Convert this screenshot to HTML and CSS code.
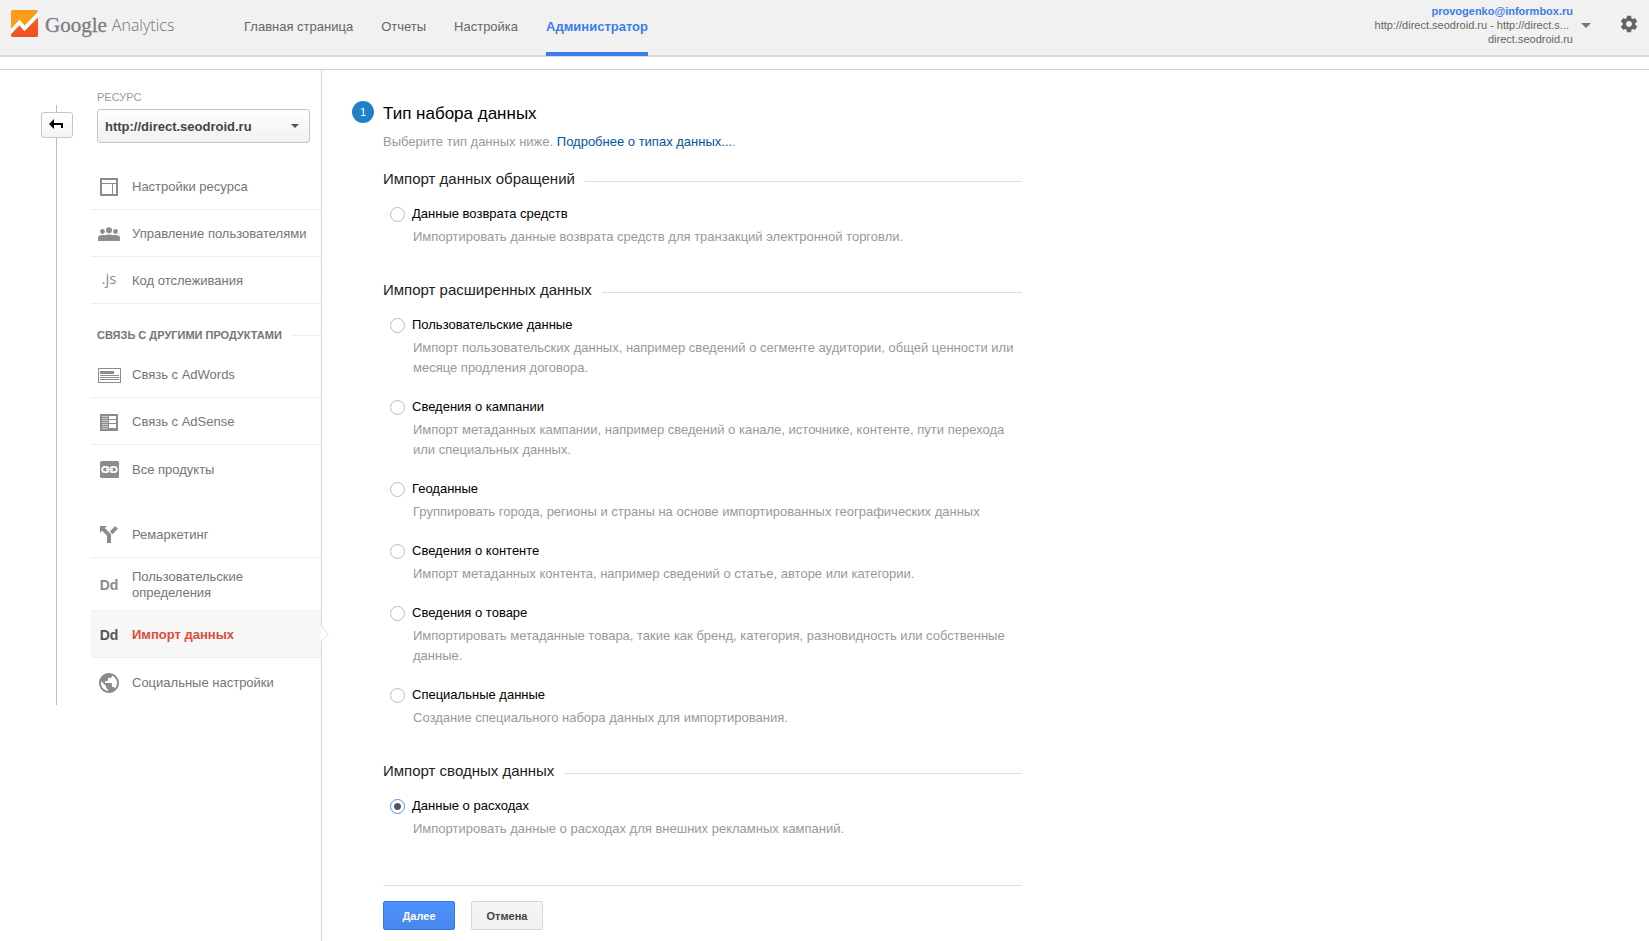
FILE: index.html
```html
<!DOCTYPE html>
<html lang="ru">
<head>
<meta charset="utf-8">
<title>Google Analytics</title>
<link rel="stylesheet" href="styles.css">
</head>
<body>
<header class="topbar">
  <a class="logo" href="#">
    <svg class="logo-mark" width="27" height="27" viewBox="0 0 27 27" aria-hidden="true">
      <defs>
        <linearGradient id="lg-top" x1="0" y1="0" x2="0" y2="1"><stop offset="0" stop-color="#f8981d"/><stop offset="1" stop-color="#fbab18"/></linearGradient>
        <linearGradient id="lg-bottom" x1="0" y1="0" x2="0" y2="1"><stop offset="0" stop-color="#f26522"/><stop offset="1" stop-color="#f04e23"/></linearGradient>
        <clipPath id="mark-clip"><rect width="27" height="27" rx="2"/></clipPath>
      </defs>
      <g clip-path="url(#mark-clip)">
        <rect width="27" height="27" fill="url(#lg-top)"/>
        <path d="M0 22.500 8.500 13l5.500 6L27 5v22H0z" fill="url(#lg-bottom)"/>
        <path d="M-2 23.500 8.500 12.500l5 6L29 2.500" fill="none" stroke="#fff" stroke-width="3.800"/>
      </g>
    </svg>
    <span class="logo-google">Google</span>
    <span class="logo-product">Analytics</span>
  </a>
  <nav class="tabs">
    <a class="tab" href="#">Главная страница</a>
    <a class="tab" href="#">Отчеты</a>
    <a class="tab" href="#">Настройка</a>
    <a class="tab tab-active" href="#">Администратор</a>
  </nav>
  <div class="account">
    <a class="account-email" href="#">provogenko@informbox.ru</a>
    <span class="account-view">http://direct.seodroid.ru - http://direct.s...</span>
    <span>direct.seodroid.ru</span>
  </div>
  <button class="icon-button account-toggle" type="button" aria-label="Аккаунты">
    <svg width="10" height="5" viewBox="0 0 10 5"><path d="M0 0h10L5 5z" fill="#777"/></svg>
  </button>
  <button class="icon-button" type="button" aria-label="Параметры">
    <svg width="20" height="20" viewBox="0 0 24 24"><path fill="#636363" d="M19.430 12.980c.04-.32.07-.64.07-.98s-.03-.66-.07-.98l2.110-1.650c.19-.15.24-.42.120-.64l-2-3.460c-.12-.22-.39-.3-.61-.22l-2.490 1c-.52-.4-1.080-.73-1.690-.98l-.38-2.650C14.460 2.180 14.250 2 14 2h-4c-.25 0-.46.18-.49.42l-.38 2.650c-.61.25-1.170.59-1.690.98l-2.490-1c-.23-.09-.49 0-.61.22l-2 3.460c-.13.22-.07.49.12.64l2.110 1.650c-.04.32-.07.65-.07.98s.03.66.07.98l-2.110 1.650c-.19.15-.24.42-.12.64l2 3.460c.12.22.39.3.61.22l2.490-1c.52.4 1.080.73 1.690.98l.38 2.650c.03.24.24.42.49.42h4c.25 0 .46-.18.49-.42l.38-2.650c.61-.25 1.170-.59 1.690-.98l2.490 1c.23.09.49 0 .61-.22l2-3.460c.12-.22.07-.49-.12-.64l-2.110-1.650zM12 15.500c-1.930 0-3.500-1.570-3.500-3.500s1.570-3.500 3.500-3.500 3.500 1.570 3.500 3.500-1.570 3.500-3.500 3.500z"/></svg>
  </button>
</header>

<div class="page">
  <aside class="sidebar">
    <div class="rail">
      <div class="rail-line"></div>
      <button class="back" type="button" aria-label="Назад">
        <svg width="15" height="10" viewBox="0 0 15 10"><path d="M0 5 5 0v4h9v5h-2V6H5v4z" fill="#000"/></svg>
      </button>
    </div>
    <div class="side">
      <div class="picker">
        <label class="picker-label" for="property">РЕСУРС</label>
        <div class="picker-box">
          <select id="property" class="picker-select"><option>http://direct.seodroid.ru</option></select>
          <svg class="picker-arrow" width="8" height="4" viewBox="0 0 8 4"><path d="M0 0h8L4 4z" fill="#555"/></svg>
        </div>
      </div>
      <nav class="menu">
        <a class="item" href="#">
          <span class="item-icon"><svg width="18" height="18" viewBox="0 0 18 18" shape-rendering="crispEdges"><path fill="#8c8c8c" d="M0 0h18v18H0zM2 2v3h14V2zM2 6v10h10V6zM13 6v10h3V6z" fill-rule="evenodd"/></svg></span>
          Настройки ресурса
        </a>
        <a class="item" href="#">
          <span class="item-icon"><svg width="22" height="15" viewBox="0 0 22 15"><g fill="#8c8c8c"><circle cx="4.500" cy="4.500" r="2.400"/><circle cx="11" cy="3.200" r="3"/><circle cx="17.500" cy="4.500" r="2.400"/><path d="M0 14V10.500C0 8.800 2.500 8 5 8c1 0 1.500.1 2.200.3C8.300 7.800 9.500 7.500 11 7.500s2.700.3 3.800.8C15.500 8.100 16 8 17 8c2.500 0 5 .8 5 2.500V14z"/></g></svg></span>
          Управление пользователями
        </a>
        <a class="item" href="#">
          <span class="item-icon icon-js">.js</span>
          Код отслеживания
        </a>
      </nav>
      <h2 class="menu-title">СВЯЗЬ С ДРУГИМИ ПРОДУКТАМИ</h2>
      <nav class="menu menu-linked">
        <a class="item" href="#">
          <span class="item-icon"><svg width="23" height="15" viewBox="0 0 23 15" shape-rendering="crispEdges"><path fill="#8c8c8c" fill-rule="evenodd" d="M0 0h23v15H0zM1 1v13h21V1zM2 3h14v3H2zM2 7h19v1H2zM2 9h19v1H2zM2 11h19v1H2z"/></svg></span>
          Связь с AdWords
        </a>
        <a class="item" href="#">
          <span class="item-icon"><svg width="18" height="17" viewBox="0 0 18 17" shape-rendering="crispEdges"><rect width="18" height="17" fill="#8c8c8c"/><path fill="#fff" d="M9 2h7v3H9zM9 6h7v3H9zM9 10h7v4H9z"/><path fill="#ccc" d="M2 2h6v1H2zM2 4h6v1H2zM2 6h6v1H2zM2 8h6v1H2zM2 10h6v1H2zM2 12h6v1H2zM2 14h6v1H2z"/></svg></span>
          Связь с AdSense
        </a>
        <a class="item" href="#">
          <span class="item-icon"><svg width="19" height="17" viewBox="0 0 19 17"><rect width="19" height="17" rx="1.500" fill="#8c8c8c"/><g fill="none" stroke="#fff" stroke-width="1.800"><path d="M8.700 7C8.200 6.200 7.500 5.900 6.500 5.900H4.800a2.600 2.600 0 0 0 0 5.200h1.700c1 0 1.700-.3 2.200-1.100M10.300 7c.5-.8 1.200-1.100 2.200-1.100h1.700a2.600 2.600 0 0 1 0 5.200h-1.700c-1 0-1.700-.3-2.200-1.100M6 8.500h7"/></g></svg></span>
          Все продукты
        </a>
      </nav>
      <nav class="menu menu-extra">
        <a class="item" href="#">
          <span class="item-icon"><svg width="18" height="18" viewBox="0 0 18 18"><g fill="#8c8c8c"><path d="M0 0h7L4.900 2.100 11 8.200V17H7V9.800L2.200 4.800 0 7z"/><path d="M9.800 5.400 15.200 0 18 2.700 12.500 8.200z"/></g></svg></span>
          Ремаркетинг
        </a>
        <a class="item item-tall" href="#">
          <span class="item-icon icon-dd">Dd</span>
          Пользовательские<br>определения
        </a>
        <a class="item item-active" href="#" aria-current="page">
          <span class="item-icon icon-dd">Dd</span>
          Импорт данных
          <svg class="pointer" width="9" height="16" viewBox="0 0 9 16"><path d="M0 0v16L8 8z" fill="#fff"/><path d="M0 .5 7.500 8 0 15.500" fill="none" stroke="#ddd"/></svg>
        </a>
        <a class="item" href="#">
          <span class="item-icon"><svg width="20" height="20" viewBox="2 2 20 20"><path fill="#8c8c8c" d="M12 2C6.480 2 2 6.480 2 12s4.480 10 10 10 10-4.480 10-10S17.520 2 12 2zm-1 17.930c-3.950-.49-7-3.850-7-7.930 0-.62.08-1.210.21-1.790L9 15v1c0 1.100.9 2 2 2v1.930zm6.900-2.540c-.26-.81-1-1.390-1.900-1.390h-1v-3c0-.55-.45-1-1-1H8v-2h2c.55 0 1-.45 1-1V7h2c1.100 0 2-.9 2-2v-.41c2.930 1.190 5 4.060 5 7.410 0 2.080-.8 3.970-2.100 5.390z"/></svg></span>
          Социальные настройки
        </a>
      </nav>
    </div>
  </aside>

  <main class="content">
    <span class="step">1</span>
    <form class="form">
      <h1 class="title">Тип набора данных</h1>
      <p class="lead">Выберите тип данных ниже. <a class="link" href="#">Подробнее о типах данных...</a>.</p>

      <fieldset class="group">
        <legend class="group-title">Импорт данных обращений</legend>
        <div class="option">
          <input class="radio" type="radio" name="type" id="refund" aria-describedby="refund-d">
          <label class="option-label" for="refund">Данные возврата средств</label>
          <p class="option-text" id="refund-d">Импортировать данные возврата средств для транзакций электронной торговли.</p>
        </div>
      </fieldset>

      <fieldset class="group">
        <legend class="group-title">Импорт расширенных данных</legend>
        <div class="option">
          <input class="radio" type="radio" name="type" id="user" aria-describedby="user-d">
          <label class="option-label" for="user">Пользовательские данные</label>
          <p class="option-text" id="user-d">Импорт пользовательских данных, например сведений о сегменте аудитории, общей ценности или месяце продления договора.</p>
        </div>
        <div class="option">
          <input class="radio" type="radio" name="type" id="campaign" aria-describedby="campaign-d">
          <label class="option-label" for="campaign">Сведения о кампании</label>
          <p class="option-text" id="campaign-d">Импорт метаданных кампании, например сведений о канале, источнике, контенте, пути перехода или специальных данных.</p>
        </div>
        <div class="option">
          <input class="radio" type="radio" name="type" id="geo" aria-describedby="geo-d">
          <label class="option-label" for="geo">Геоданные</label>
          <p class="option-text" id="geo-d">Группировать города, регионы и страны на основе импортированных географических данных</p>
        </div>
        <div class="option">
          <input class="radio" type="radio" name="type" id="contents" aria-describedby="contents-d">
          <label class="option-label" for="contents">Сведения о контенте</label>
          <p class="option-text" id="contents-d">Импорт метаданных контента, например сведений о статье, авторе или категории.</p>
        </div>
        <div class="option">
          <input class="radio" type="radio" name="type" id="product" aria-describedby="product-d">
          <label class="option-label" for="product">Сведения о товаре</label>
          <p class="option-text" id="product-d">Импортировать метаданные товара, такие как бренд, категория, разновидность или собственные данные.</p>
        </div>
        <div class="option">
          <input class="radio" type="radio" name="type" id="custom" aria-describedby="custom-d">
          <label class="option-label" for="custom">Специальные данные</label>
          <p class="option-text" id="custom-d">Создание специального набора данных для импортирования.</p>
        </div>
      </fieldset>

      <fieldset class="group">
        <legend class="group-title">Импорт сводных данных</legend>
        <div class="option">
          <input class="radio" type="radio" name="type" id="cost" aria-describedby="cost-d" checked>
          <label class="option-label" for="cost">Данные о расходах</label>
          <p class="option-text" id="cost-d">Импортировать данные о расходах для внешних рекламных кампаний.</p>
        </div>
      </fieldset>

      <div class="actions">
        <button class="button button-primary" type="button">Далее</button>
        <button class="button" type="button">Отмена</button>
      </div>
    </form>
  </main>
</div>
</body>
</html>
```
FILE: styles.css
```css
* {
  box-sizing: border-box;
}

body {
  margin: 0;
  min-height: 100vh;
  display: flex;
  flex-direction: column;
  background: #fff;
  color: #222;
  font: 13px/20px "Liberation Sans", Arial, sans-serif;
}

a {
  color: inherit;
  text-decoration: none;
}

h1, h2, p {
  margin: 0;
}

svg {
  display: block;
  flex: none;
}

/* Top bar */

.topbar {
  display: flex;
  height: 57px;
  padding: 0 10px 0 11px;
  background: #f1f1f1;
  border-bottom: 2px solid #d9d9d9;
}

.logo {
  display: flex;
  align-items: flex-start;
  width: 233px;
  color: #757575;
}

.logo-mark {
  margin-top: 10px;
}

.logo-google {
  margin: 11px 0 0 7px;
  font: 21px/28px "Liberation Serif", "Times New Roman", serif;
  color: #7b7e82;
  -webkit-text-stroke: 0.3px #7b7e82;
}

.logo-product {
  margin: 11px 0 0 5px;
  font: 300 16px/28px "Open Sans", sans-serif;
}

.tabs {
  display: flex;
  gap: 28px;
}

.tab {
  height: 56px;
  padding-top: 17px;
  color: #666;
}

.tab-active {
  border-bottom: 4px solid #3b7ded;
  color: #3b7ded;
  font-weight: bold;
}

.account {
  display: flex;
  flex-direction: column;
  align-items: flex-end;
  margin-left: auto;
  padding-top: 4px;
  color: #666;
  font-size: 11px;
  line-height: 14px;
}

.account-email {
  color: #3b7ded;
  font-weight: bold;
}

.account-view {
  padding-right: 4px;
}

.icon-button {
  display: flex;
  align-items: center;
  justify-content: center;
  width: 20px;
  height: 48px;
  padding: 0;
  border: 0;
  background: none;
}

.account-toggle {
  margin: 1px 23px 0 3px;
}

/* Page frame */

.page {
  display: flex;
  flex: 1;
  margin-top: 12px;
  border-top: 1px solid #ccc;
}

.sidebar {
  display: flex;
  flex: none;
  align-items: flex-start;
  width: 322px;
  padding-left: 41px;
  border-right: 1px solid #d6d6d6;
}

.rail {
  display: grid;
  flex: none;
  align-self: flex-start;
  width: 32px;
  height: 600px;
  margin-top: 35px;
}

.rail-line {
  grid-area: 1 / 1;
  width: 1px;
  margin-left: 15px;
  background: #bbb;
}

.back {
  grid-area: 1 / 1;
  display: flex;
  align-items: center;
  justify-content: center;
  height: 26px;
  margin-top: 7px;
  padding: 0 2px 2px 0;
  border: 1px solid #c6c6c6;
  border-radius: 3px;
  background: linear-gradient(#fff, #f3f3f3);
}

.side {
  flex: 1;
  margin-left: 18px;
  padding-top: 17px;
}

.picker {
  padding: 0 11px 0 6px;
}

.picker-label {
  display: block;
  color: #999;
  font-size: 11px;
}

.picker-box {
  display: grid;
  align-items: center;
  margin-top: 2px;
}

.picker-select {
  grid-area: 1 / 1;
  appearance: none;
  width: 100%;
  height: 34px;
  padding: 0 24px 0 7px;
  border: 1px solid #c6c6c6;
  border-radius: 3px;
  background: linear-gradient(#fefefe, #f1f1f1);
  color: #444;
  font: bold 13px "Liberation Sans", Arial, sans-serif;
}

.picker-arrow {
  grid-area: 1 / 1;
  justify-self: end;
  margin-right: 11px;
  pointer-events: none;
}

.menu {
  margin-top: 20px;
}

.item {
  display: grid;
  grid-template-columns: 36px 1fr;
  align-content: center;
  align-items: center;
  column-gap: 5px;
  position: relative;
  height: 47px;
  padding-top: 2px;
  border-bottom: 1px solid #eee;
  color: #757575;
  line-height: 16px;
}

.menu-linked .item:last-child,
.menu-extra .item:last-child {
  border-bottom: 0;
}

.item-icon {
  display: flex;
  justify-content: center;
}

.icon-js {
  padding-bottom: 6px;
  color: #8c8c8c;
  font: 15px/16px "Open Sans", sans-serif;
}

.item-tall {
  height: 53px;
}

.item-tall .item-icon {
  grid-row: span 2;
}

.icon-dd {
  color: #8c8c8c;
  font-size: 14px;
  font-weight: bold;
}

.item-active {
  background: #f7f7f7;
  color: #dd4b39;
  font-weight: bold;
}

.item-active .icon-dd {
  color: #555;
}

.pointer {
  position: absolute;
  top: 15px;
  right: -9px;
}

.menu-title {
  display: flex;
  align-items: center;
  gap: 10px;
  margin-top: 21px;
  padding-left: 6px;
  color: #757575;
  font-size: 11px;
  line-height: 20px;
  white-space: nowrap;
}

.menu-title::after {
  content: "";
  flex: 1;
  height: 1px;
  background: #eee;
}

.menu-linked {
  margin-top: 6px;
}

.menu-extra {
  margin-top: 19px;
}

/* Form */

.content {
  display: flex;
  flex: 1;
  align-items: flex-start;
  gap: 9px;
  padding: 34px 30px 11px;
}

.step {
  flex: none;
  width: 22px;
  height: 22px;
  margin-top: -3px;
  border-radius: 50%;
  background: #2080c8;
  color: #fff;
  font-size: 11px;
  line-height: 22px;
  text-align: center;
}

.form {
  flex: 1;
  max-width: 639px;
}

.title {
  color: #000;
  font-size: 17px;
  font-weight: normal;
  line-height: 20px;
}

.lead {
  margin-top: 8px;
  color: #999;
}

.link {
  color: #0055a0;
}

.group {
  min-width: 0;
  margin: 17px 0 0;
  padding: 0;
  border: 0;
}

.group + .group {
  margin-top: 33px;
}

.group-title {
  display: flex;
  align-items: center;
  gap: 10px;
  width: 100%;
  margin-bottom: 15px;
  padding: 0;
  color: #222;
  font-size: 15px;
}

.group-title::after {
  content: "";
  flex: 1;
  height: 1px;
  margin-top: 4px;
  background: #ddd;
}

.option {
  display: grid;
  grid-template-columns: 15px 1fr;
  align-items: center;
  column-gap: 7px;
  row-gap: 3px;
  padding-left: 7px;
}

.option + .option {
  margin-top: 19px;
}

.radio {
  appearance: none;
  width: 15px;
  height: 15px;
  margin: 0;
  border: 1px solid #bbb;
  border-radius: 50%;
  background: #fff;
}

.radio:checked {
  border-color: #4d90fe;
  background: radial-gradient(circle, #555 3px, #fff 4px);
}

.option-label {
  color: #000;
}

.option-text {
  grid-column: 2;
  padding-left: 1px;
  color: #999;
}

.actions {
  display: flex;
  gap: 16px;
  margin-top: 46px;
  padding-top: 15px;
  border-top: 1px solid #ddd;
}

.button {
  width: 72px;
  height: 29px;
  padding: 0;
  border: 1px solid #d6d6d6;
  border-radius: 2px;
  background: linear-gradient(#f5f5f5, #f1f1f1);
  color: #444;
  font: bold 11px "Liberation Sans", Arial, sans-serif;
}

.button-primary {
  border-color: #3079ed;
  background: linear-gradient(#4d90fe, #4787ed);
  color: #fff;
}
```
